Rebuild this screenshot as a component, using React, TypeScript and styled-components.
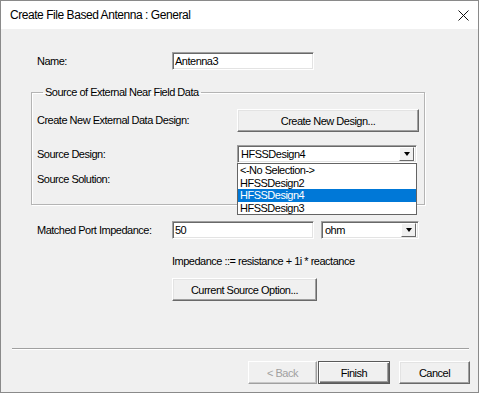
import styled, { createGlobalStyle, css } from "styled-components";

const GlobalStyle = createGlobalStyle`
  html, body {
    margin: 0;
    padding: 0;
    background: #ffffff;
  }
  body {
    font-family: "Liberation Sans", Arial, sans-serif;
  }
`;

const Window = styled.div`
  box-sizing: border-box;
  width: 479px;
  height: 393px;
  border: 1px solid #8a8a8a;
  background: #f0f0f0;
  display: flex;
  flex-direction: column;
  font-size: 11px;
  letter-spacing: -0.5px;
  color: #000;
`;

const TitleBar = styled.div`
  height: 28px;
  background: #ffffff;
  display: flex;
  align-items: center;
  justify-content: space-between;
  padding: 0 9px 0 9px;
  font-size: 12px;
  letter-spacing: -0.45px;
  color: #000;
`;

const Body = styled.div`
  flex: 1;
  display: flex;
  flex-direction: column;
`;

const Row = styled.div<{ $top?: number; $indent?: number }>`
  display: flex;
  align-items: center;
  height: 18px;
  margin-top: ${(p) => p.$top ?? 0}px;
  padding-left: ${(p) => p.$indent ?? 36}px;
`;

const Label = styled.span<{ $width: number }>`
  width: ${(p) => p.$width}px;
  flex-shrink: 0;
  line-height: 13px;
`;

const sunken = css`
  box-sizing: border-box;
  background: #ffffff;
  border: 1px solid;
  border-color: #a0a0a0 #ffffff #ffffff #a0a0a0;
  box-shadow: inset 1px 1px 0 #696969, inset -1px -1px 0 #e3e3e3;
`;

const TextBox = styled.div<{ $width: number }>`
  ${sunken};
  width: ${(p) => p.$width}px;
  height: 18px;
  padding: 2px 2px;
  line-height: 13px;
`;

const ComboWrap = styled.div<{ $width: number; $gap?: number }>`
  position: relative;
  width: ${(p) => p.$width}px;
  margin-left: ${(p) => p.$gap ?? 0}px;
`;

const ComboField = styled.div`
  ${sunken};
  height: 18px;
  display: flex;
  align-items: center;
  justify-content: space-between;
  padding: 0 2px 0 3px;
  line-height: 13px;
`;

const ArrowButton = styled.div`
  box-sizing: border-box;
  width: 15px;
  height: 14px;
  background: #f0f0f0;
  border: 1px solid;
  border-color: #fff #696969 #696969 #fff;
  display: flex;
  align-items: center;
  justify-content: center;
`;

const Arrow = styled.div`
  width: 0;
  height: 0;
  border-left: 3.5px solid transparent;
  border-right: 3.5px solid transparent;
  border-top: 4px solid #000;
`;

const DropList = styled.div`
  position: absolute;
  top: 18px;
  left: 0;
  width: 100%;
  box-sizing: border-box;
  border: 1px solid #646464;
  background: #ffffff;
  z-index: 2;
`;

const DropItem = styled.div<{ $selected?: boolean }>`
  height: 12.5px;
  line-height: 12.5px;
  padding-left: 2px;
  background: ${(p) => (p.$selected ? "#0078d7" : "transparent")};
  color: ${(p) => (p.$selected ? "#ffffff" : "#000")};
`;

const GroupBox = styled.fieldset`
  margin: 16px 0 0 30px;
  width: 394px;
  box-sizing: border-box;
  padding: 10px 0 18px 5px;
  border: 1px solid #b4b4b4;
  box-shadow: inset 1px 1px 0 #fff, 1px 1px 0 #fff;
  min-width: 0;
`;

const Legend = styled.legend`
  margin-left: 6px;
  padding: 0 2px;
  line-height: 13px;
`;

const GroupRow = styled.div<{ $top?: number; $height: number }>`
  display: flex;
  align-items: center;
  height: ${(p) => p.$height}px;
  margin-top: ${(p) => p.$top ?? 0}px;
`;

const Button = styled.button<{
  $width: number;
  $gap?: number;
  $default?: boolean;
}>`
  box-sizing: border-box;
  width: ${(p) => p.$width}px;
  height: 23px;
  margin: 0 0 0 ${(p) => p.$gap ?? 0}px;
  padding: 0;
  font-family: inherit;
  font-size: 11px;
  letter-spacing: -0.5px;
  color: #000;
  background: #f0f0f0;
  border: 1px solid;
  border-color: #ffffff #696969 #696969 #ffffff;
  box-shadow: inset -1px -1px 0 #a0a0a0, inset 1px 1px 0 #e3e3e3;
  ${(p) =>
    p.$default &&
    css`
      border: 1px solid #5a5a5a;
      box-shadow: inset 1px 1px 0 #ffffff, inset -1px -1px 0 #696969,
        inset -2px -2px 0 #a0a0a0;
    `}
  &:disabled {
    color: #a0a0a0;
    border-color: #ffffff #a0a0a0 #a0a0a0 #ffffff;
    box-shadow: inset -1px -1px 0 #c8c8c8;
  }
`;

const Note = styled.div`
  margin: 16px 0 0 171px;
  line-height: 13px;
`;

const ButtonRow = styled.div<{ $top: number }>`
  display: flex;
  margin: ${(p) => p.$top}px 0 0 171px;
`;

const Spacer = styled.div`
  flex: 1;
`;

const Separator = styled.div`
  margin: 0 9px 0 11px;
  border-top: 1px solid #a0a0a0;
  border-bottom: 1px solid #ffffff;
`;

const Footer = styled.div`
  display: flex;
  justify-content: flex-end;
  padding: 11px 8px 8px 0;
`;

const CloseIcon = () => (
  <svg width="11" height="11" viewBox="0 0 11 11">
    <path d="M0.5 0.5 L10.5 10.5 M10.5 0.5 L0.5 10.5" stroke="#111" strokeWidth="1" />
  </svg>
);

const designs = ["<-No Selection->", "HFSSDesign2", "HFSSDesign4", "HFSSDesign3"];

export default function App() {
  return (
    <>
      <GlobalStyle />
      <Window>
        <TitleBar>
          <span>Create File Based Antenna : General</span>
          <CloseIcon />
        </TitleBar>
        <Body>
          <Row $top={23}>
            <Label $width={135}>Name:</Label>
            <TextBox $width={142}>Antenna3</TextBox>
          </Row>

          <GroupBox>
            <Legend>Source of External Near Field Data</Legend>
            <GroupRow $height={23}>
              <Label $width={200}>Create New External Data Design:</Label>
              <Button $width={182}>Create New Design...</Button>
            </GroupRow>
            <GroupRow $height={18} $top={13}>
              <Label $width={200}>Source Design:</Label>
              <ComboWrap $width={180}>
                <ComboField>
                  <span>HFSSDesign4</span>
                  <ArrowButton>
                    <Arrow />
                  </ArrowButton>
                </ComboField>
                <DropList>
                  {designs.map((d) => (
                    <DropItem key={d} $selected={d === "HFSSDesign4"}>
                      {d}
                    </DropItem>
                  ))}
                </DropList>
              </ComboWrap>
            </GroupRow>
            <GroupRow $height={13} $top={10}>
              <Label $width={200}>Source Solution:</Label>
            </GroupRow>
          </GroupBox>

          <Row $top={16}>
            <Label $width={135}>Matched Port Impedance:</Label>
            <TextBox $width={142}>50</TextBox>
            <ComboWrap $width={98} $gap={7}>
              <ComboField>
                <span>ohm</span>
                <ArrowButton>
                  <Arrow />
                </ArrowButton>
              </ComboField>
            </ComboWrap>
          </Row>

          <Note>Impedance ::= resistance + 1i * reactance</Note>

          <ButtonRow $top={10}>
            <Button $width={145}>Current Source Option...</Button>
          </ButtonRow>

          <Spacer />
          <Separator />
          <Footer>
            <Button $width={69} disabled>
              &lt; Back
            </Button>
            <Button $width={72} $gap={1} $default>
              Finish
            </Button>
            <Button $width={71} $gap={9}>
              Cancel
            </Button>
          </Footer>
        </Body>
      </Window>
    </>
  );
}
